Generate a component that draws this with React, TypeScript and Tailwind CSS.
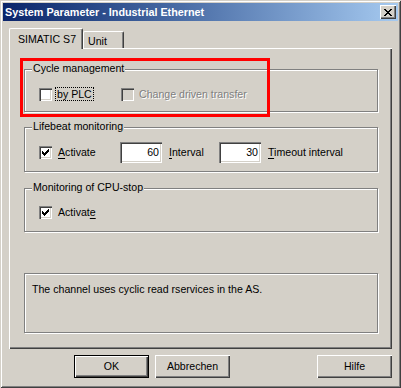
import type { ReactNode } from 'react';

const raised = 'shadow-[inset_1px_1px_0_#fff,inset_-1px_-1px_0_#404040,inset_-2px_-2px_0_#808080]';
const sunken = 'shadow-[inset_1px_1px_0_#808080,inset_2px_2px_0_#404040,inset_-1px_-1px_0_#fff,inset_-2px_-2px_0_#d4d0c8]';

// pixel runs [x, y, w] for the little glyphs
const checkRuns = [[6, 0, 1], [5, 1, 2], [0, 2, 1], [4, 2, 3], [0, 3, 2], [3, 3, 3], [0, 4, 5], [1, 5, 3], [2, 6, 1]];
const closeRuns = [[0, 0, 2], [6, 0, 2], [1, 1, 2], [5, 1, 2], [2, 2, 4], [3, 3, 2], [2, 4, 4], [1, 5, 2], [5, 5, 2], [0, 6, 2], [6, 6, 2]];

function Pixels({ runs, w, h }: { runs: number[][]; w: number; h: number }) {
  return (
    <svg width={w} height={h} viewBox={`0 0 ${w} ${h}`} shapeRendering="crispEdges">
      {runs.map(([x, y, rw], i) => (
        <rect key={i} x={x} y={y} width={rw} height={1} fill="#000" />
      ))}
    </svg>
  );
}

function Checkbox({ checked, disabled }: { checked?: boolean; disabled?: boolean }) {
  return (
    <span
      className={`w-[13px] h-[13px] shrink-0 flex items-center justify-center ${sunken} ${
        disabled ? 'bg-[#d4d0c8]' : 'bg-white'
      }`}
    >
      {checked && <Pixels runs={checkRuns} w={7} h={7} />}
    </span>
  );
}

function TextBox({ value }: { value: string }) {
  return (
    <div className={`w-[42px] h-[21px] shrink-0 bg-white flex items-center justify-end pr-[3px] ${sunken}`}>
      {value}
    </div>
  );
}

function GroupBox({ label, className, children }: { label?: string; className: string; children: ReactNode }) {
  return (
    <div
      className={`relative border border-[#808080] shadow-[inset_1px_1px_0_#fff,1px_1px_0_#fff] ${className}`}
    >
      {label && (
        <span className="absolute left-[7px] top-[-8px] px-[1px] bg-[#d4d0c8] leading-[13px]">{label}</span>
      )}
      {children}
    </div>
  );
}

function Button({ children, isDefault }: { children: ReactNode; isDefault?: boolean }) {
  return (
    <button
      className={`w-[75px] h-[23px] flex items-center justify-center bg-[#d4d0c8] ${
        isDefault
          ? 'border border-black shadow-[inset_1px_1px_0_#fff,inset_-1px_-1px_0_#404040,inset_-2px_-2px_0_#808080]'
          : raised
      }`}
    >
      {children}
    </button>
  );
}

export default function App() {
  return (
    <div
      className="relative w-[401px] h-[388px] p-[3px] flex flex-col bg-[#d4d0c8] text-black text-[10.6px] leading-[13px] shadow-[inset_1px_1px_0_#d4d0c8,inset_-1px_-1px_0_#404040,inset_2px_2px_0_#fff,inset_-2px_-2px_0_#808080]"
      style={{ fontFamily: '"Liberation Sans", Arial, sans-serif' }}
    >
      {/* Title bar */}
      <div className="h-[18px] flex items-center bg-linear-to-r from-[#0a246a] to-[#a6caf0]">
        <span className="pl-[2px] text-white font-bold text-[10.8px]">System Parameter - Industrial Ethernet</span>
        <div className={`ml-auto mr-[2px] w-[16px] h-[14px] flex items-center justify-center bg-[#d4d0c8] ${raised}`}>
          <Pixels runs={closeRuns} w={8} h={7} />
        </div>
      </div>

      <div className="mt-[7px] px-[6px]">
        {/* Tabs */}
        <div className="h-[20px] flex items-end">
          <div className="relative z-10 w-[74px] h-[21px] -mb-px pl-[8px] pt-[4px] bg-[#d4d0c8] border-l border-t border-white border-r border-r-[#404040] rounded-t-[2px] shadow-[inset_-1px_0_0_#808080]">
            SIMATIC S7
          </div>
          <div className="w-[41px] h-[17px] pl-[4px] pt-[3px] border-l border-t border-white border-r border-r-[#404040] rounded-t-[2px] shadow-[inset_-1px_0_0_#808080]">
            Unit
          </div>
        </div>

        {/* Tab panel */}
        <div className="h-[301px] pt-[21px] pl-[15px] pr-[14px] shadow-[inset_1px_1px_0_#fff,inset_-1px_-1px_0_#404040,inset_-2px_-2px_0_#808080]">
          <GroupBox label="Cycle management" className="h-[43px] pt-[17px] pl-[14px]">
            <div className="flex items-center">
              <div className="w-[82px] flex items-center">
                <Checkbox />
                <span className="ml-[3px] px-[1px] border border-dotted border-black leading-[12px]">by PLC</span>
              </div>
              <Checkbox disabled />
              <span className="ml-[5px] text-[#808080] [text-shadow:1px_1px_0_#fff]">Change driven transfer</span>
            </div>
          </GroupBox>

          <GroupBox label="Lifebeat monitoring" className="mt-[15px] h-[45px] pt-[14px] pl-[14px]">
            <div className="h-[21px] flex items-center">
              <div className="w-[81px] flex items-center">
                <Checkbox checked />
                <span className="ml-[6px]">
                  <span className="underline underline-offset-[2px]">A</span>ctivate
                </span>
              </div>
              <TextBox value="60" />
              <span className="w-[50px] ml-[7px]">
                <span className="underline underline-offset-[2px]">I</span>nterval
              </span>
              <TextBox value="30" />
              <span className="ml-[7px]">
                <span className="underline underline-offset-[2px]">T</span>imeout interval
              </span>
            </div>
          </GroupBox>

          <GroupBox label="Monitoring of CPU-stop" className="mt-[16px] h-[44px] pt-[17px] pl-[14px]">
            <div className="flex items-center">
              <Checkbox checked />
              <span className="ml-[6px]">
                Activat<span className="underline underline-offset-[2px]">e</span>
              </span>
            </div>
          </GroupBox>

          <GroupBox className="mt-[41px] h-[60px] pt-[9px] pl-[7px]">
            <p>The channel uses cyclic read rservices in the AS.</p>
          </GroupBox>
        </div>

        {/* Dialog buttons */}
        <div className="mt-[6px] flex">
          <div className="ml-[65px]">
            <Button isDefault>OK</Button>
          </div>
          <div className="ml-[6px]">
            <Button>Abbrechen</Button>
          </div>
          <div className="ml-auto">
            <Button>Hilfe</Button>
          </div>
        </div>
      </div>

      {/* highlight annotation */}
      <div className="absolute left-[20px] top-[58px] w-[250px] h-[59px] border-[3px] border-[#ff0000]" />
    </div>
  );
}
